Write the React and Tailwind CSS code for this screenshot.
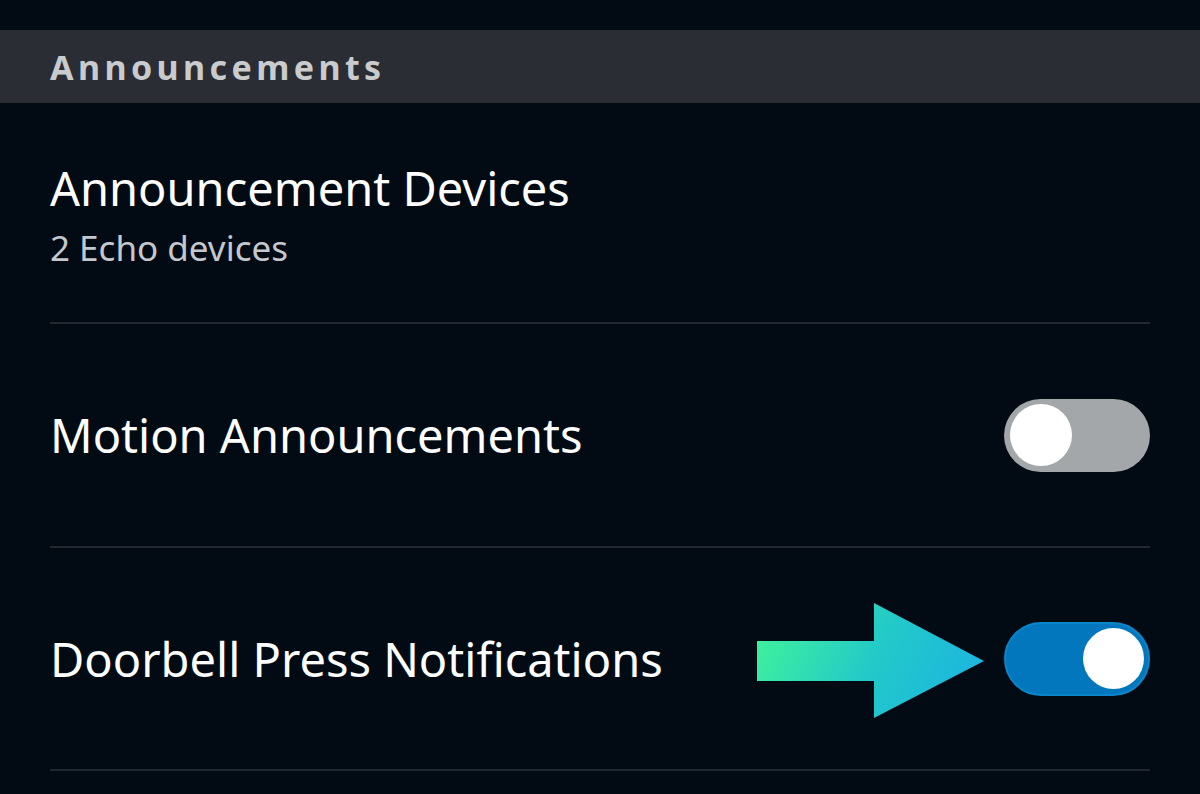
export default function App() {
  const font = { fontFamily: '"Noto Sans", "Open Sans", sans-serif' };
  return (
    <div className="w-[1200px] h-[794px] bg-[#020b14] overflow-hidden pt-[30px]" style={font}>
      <div className="h-[73px] bg-[#2a2d34] flex items-center px-[50px]">
        <span className="text-[#c9cbcd] text-[34px] font-bold tracking-[4.4px] leading-none">Announcements</span>
      </div>
      <div className="px-[50px]">
        <div className="h-[219px] pt-[57px]">
          <div className="text-white text-[47px] leading-[56px]">Announcement Devices</div>
          <div className="text-[#c4c8cc] text-[35px] leading-[40px] mt-[12px]">2 Echo devices</div>
        </div>
        <div className="h-[2px] bg-[#22272e]" />
        <div className="h-[222px] flex items-center justify-between">
          <div className="text-white text-[47px] leading-[56px]">Motion Announcements</div>
          <div className="w-[146px] h-[73px] rounded-full bg-[#a4a7aa] flex items-center pl-[6px]">
            <div className="w-[62px] h-[62px] rounded-full bg-white" />
          </div>
        </div>
        <div className="h-[2px] bg-[#22272e]" />
        <div className="h-[221px] flex items-center">
          <div className="text-white text-[47px] leading-[56px]">Doorbell Press Notifications</div>
          <svg className="ml-auto mr-[19px] mt-[5px]" width="228" height="116" viewBox="0 0 228 116">
            <defs>
              <linearGradient id="ag" gradientUnits="userSpaceOnUse" x1="0" y1="20" x2="200" y2="116">
                <stop offset="0" stopColor="#3ff39a" />
                <stop offset="0.55" stopColor="#22c9c9" />
                <stop offset="1" stopColor="#1db6de" />
              </linearGradient>
            </defs>
            <polygon points="0,38 117,38 117,0 227,58 117,115 117,78 0,78" fill="url(#ag)" />
          </svg>
          <div className="w-[146px] h-[74px] rounded-full bg-[#0277bd] border-2 border-[#0a86c8] flex items-center justify-end pr-[4px]">
            <div className="w-[61px] h-[61px] rounded-full bg-white" />
          </div>
        </div>
        <div className="h-[2px] bg-[#22272e]" />
      </div>
    </div>
  );
}
